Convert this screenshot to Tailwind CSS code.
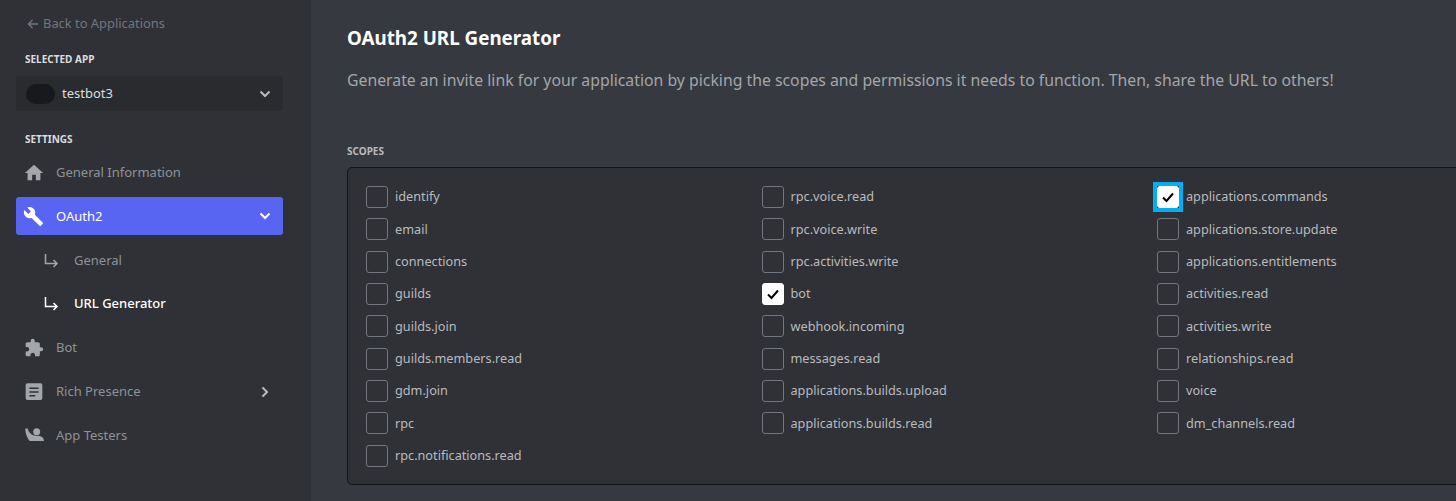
<!DOCTYPE html>
<html lang="en">
<head>
    <meta charset="UTF-8">
    <title>OAuth2 URL Generator</title>
    <script src="https://cdn.jsdelivr.net/npm/@tailwindcss/browser@4"></script>
</head>
<body class="h-[501px] w-[1456px] overflow-hidden bg-[#36393f] font-['Noto_Sans',sans-serif]">
<div class="flex h-[501px] overflow-hidden">
    <!-- sidebar -->
    <aside class="w-[311px] shrink-0 bg-[#2f3136] pl-4 pr-7">
        <a class="mt-[15px] ml-[11px] flex h-[18px] items-center gap-[4px] text-[12.900px] text-[#72767d]">
            <svg class="size-[12px]" viewBox="0 0 12 12" fill="none" stroke="#72767d" stroke-width="1.4"><path d="M11 6H1.500M5.500 2 1.500 6l4 4"/></svg>
            Back to Applications
        </a>
        <h3 class="mt-[19px] ml-[9px] h-[14px] text-[10px] leading-[14px] font-bold text-[#dcddde]">SELECTED APP</h3>
        <div class="mt-[10px] flex h-[35px] items-center rounded-[3px] border border-[#292b2f] bg-[#292b2f] pr-[11px] pl-[9px]">
            <div class="h-[20px] w-[29px] rounded-[10px] bg-[#18191c]"></div>
            <span class="ml-[7px] text-[13px] text-[#dcddde]">testbot3</span>
            <svg class="ml-auto size-[12px]" viewBox="0 0 12 12" fill="none" stroke="#b9bbbe" stroke-width="2"><path d="M1.500 3.500 6 8l4.500-4.500"/></svg>
        </div>
        <h3 class="mt-[21px] ml-[9px] h-[14px] text-[10px] leading-[14px] font-bold text-[#dcddde]">SETTINGS</h3>
        <nav class="mt-[8px] text-[13px]">
            <div class="flex h-[38px] items-center pl-[7px] text-[#8e9297]">
                <svg class="size-[22px]" viewBox="0 0 24 24" fill="#a3a6aa"><path d="M10 20v-6h4v6h5v-8h3L12 3 2 12h3v8z"/></svg>
                <span class="ml-[11px]">General Information</span>
            </div>
            <div class="mt-[5px] flex h-[38px] items-center rounded-[3px] bg-[#5865f2] pr-[12px] pl-[7px] text-white">
                <svg class="size-[21px]" viewBox="0 0 24 24" fill="#fff"><path d="m22.700 19-9.100-9.100c.9-2.300.4-5-1.500-6.900-2-2-5-2.400-7.400-1.300L9 6 6 9 1.600 4.700C.4 7.100.9 10.100 2.900 12.100c1.900 1.900 4.600 2.400 6.900 1.500l9.100 9.100c.4.400 1 .4 1.400 0l2.300-2.300c.5-.4.5-1.100.1-1.400z"/></svg>
                <span class="ml-[12px] pt-[1px]">OAuth2</span>
                <svg class="ml-auto size-[12px]" viewBox="0 0 12 12" fill="none" stroke="#fff" stroke-width="2"><path d="M1.500 3.500 6 8l4.500-4.500"/></svg>
            </div>
            <div class="mt-[4px] flex h-[43px] items-center pl-[28px] text-[#8e9297]">
                <svg class="size-[15px]" viewBox="0 0 15 15" fill="none" stroke="#a3a6aa" stroke-width="1.500"><path d="M1.500 1v9.500H13M9.500 7l3.500 3.500L9.500 14"/></svg>
                <span class="ml-[15px]">General</span>
            </div>
            <div class="flex h-[43px] items-center pl-[28px] text-white">
                <svg class="size-[15px]" viewBox="0 0 15 15" fill="none" stroke="#fff" stroke-width="1.500"><path d="M1.500 1v9.500H13M9.500 7l3.500 3.500L9.500 14"/></svg>
                <span class="ml-[15px] font-medium">URL Generator</span>
            </div>
            <div class="mt-[1px] flex h-[44px] items-center pl-[8px] text-[#8e9297]">
                <svg class="size-[20px]" viewBox="0 0 24 24" fill="#a3a6aa"><path d="M20.500 11H19V7c0-1.100-.9-2-2-2h-4V3.500a2.500 2.500 0 0 0-5 0V5H4c-1.100 0-2 .9-2 2v3.800h1.500c1.500 0 2.700 1.200 2.700 2.700S5 16.200 3.500 16.200H2V20c0 1.100.9 2 2 2h3.800v-1.500c0-1.500 1.200-2.700 2.700-2.700s2.700 1.200 2.700 2.700V22H17c1.100 0 2-.9 2-2v-4h1.500a2.500 2.500 0 0 0 0-5z"/></svg>
                <span class="ml-[12px]">Bot</span>
            </div>
            <div class="flex h-[44px] items-center pr-[12px] pl-[8px] text-[#8e9297]">
                <svg class="size-[20px]" viewBox="0 0 24 24" fill="#a3a6aa"><path fill-rule="evenodd" d="M4 1.500h16a2 2 0 0 1 2 2v16a2 2 0 0 1-2 2H4a2 2 0 0 1-2-2v-16a2 2 0 0 1 2-2zm2.500 5v2h11v-2zm0 4.500v2h11v-2zm0 4.500v2h7v-2z"/></svg>
                <span class="ml-[12px]">Rich Presence</span>
                <svg class="ml-auto size-[12px]" viewBox="0 0 12 12" fill="none" stroke="#b9bbbe" stroke-width="2"><path d="M3.500 1.500 8 6l-4.500 4.500"/></svg>
            </div>
            <div class="flex h-[44px] items-center pl-[8px] text-[#8e9297]">
                <svg class="size-[20px]" viewBox="0 0 24 24" fill="#a3a6aa"><circle cx="15.200" cy="6.800" r="4.200"/><path d="M1.500 3h3c.5 4 3.500 7 7.500 8.500l7 .5c3 1 5 3 5 6H7C4 15 1.500 9 1.500 3z"/></svg>
                <span class="ml-[12px]">App Testers</span>
            </div>
        </nav>
    </aside>

    <!-- content -->
    <main class="min-w-0 flex-1 pl-9">
        <h1 class="mt-[25px] h-[26px] text-[18.800px] leading-[26px] font-bold whitespace-nowrap text-white">OAuth2 URL Generator</h1>
        <p class="mt-[16px] h-[26px] text-[15.800px] leading-[26px] whitespace-nowrap text-[#a3a6aa]">Generate an invite link for your application by picking the scopes and permissions it needs to function. Then, share the URL to others!</p>
        <h3 class="mt-[51px] h-[14px] text-[10px] leading-[14px] font-bold text-[#b9bbbe]">SCOPES</h3>
        <div class="mt-[9px] h-[318px] w-[1200px] rounded-[5px] border border-[#141517] bg-[#2f3136] pt-[12.800px] pl-[18px]">
            <div id="scopes" class="grid w-[1186.500px] grid-flow-col grid-cols-3 grid-rows-9 text-[12.700px] text-[#b9bbbe]"></div>
        </div>
    </main>
</div>
<script>
    const scopes = [
        'identify', 'email', 'connections', 'guilds', 'guilds.join', 'guilds.members.read', 'gdm.join', 'rpc', 'rpc.notifications.read',
        'rpc.voice.read', 'rpc.voice.write', 'rpc.activities.write', 'bot', 'webhook.incoming', 'messages.read', 'applications.builds.upload', 'applications.builds.read', '',
        'applications.commands', 'applications.store.update', 'applications.entitlements', 'activities.read', 'activities.write', 'relationships.read', 'voice', 'dm_channels.read', ''
    ];
    const checked = ['bot', 'applications.commands'];
    const tick = '<svg class="size-[14px]" viewBox="0 0 14 14" fill="none" stroke="#000" stroke-width="2"><path d="M2 7.500 5.500 11 12 3.500"/></svg>';

    document.getElementById('scopes').innerHTML = scopes.map(function (name) {
        if (!name) return '<div class="h-[32.330px]"></div>';
        const on = checked.includes(name);
        const box = on ? 'bg-white border-white' : 'border-[#72767d]';
        const inner = '<span class="flex size-[22px] items-center justify-center rounded-[3px] border ' + box + '">' + (on ? tick : '') + '</span>';
        // the focused checkbox has a square ring round it
        const control = name === 'applications.commands'
            ? '<span class="flex outline-[4px] outline-[#00aff4]">' + inner + '</span>'
            : inner;
        return '<label class="flex h-[32.330px] items-center">' + control + '<span class="ml-[7px]">' + name + '</span></label>';
    }).join('');
</script>
</body>
</html>
